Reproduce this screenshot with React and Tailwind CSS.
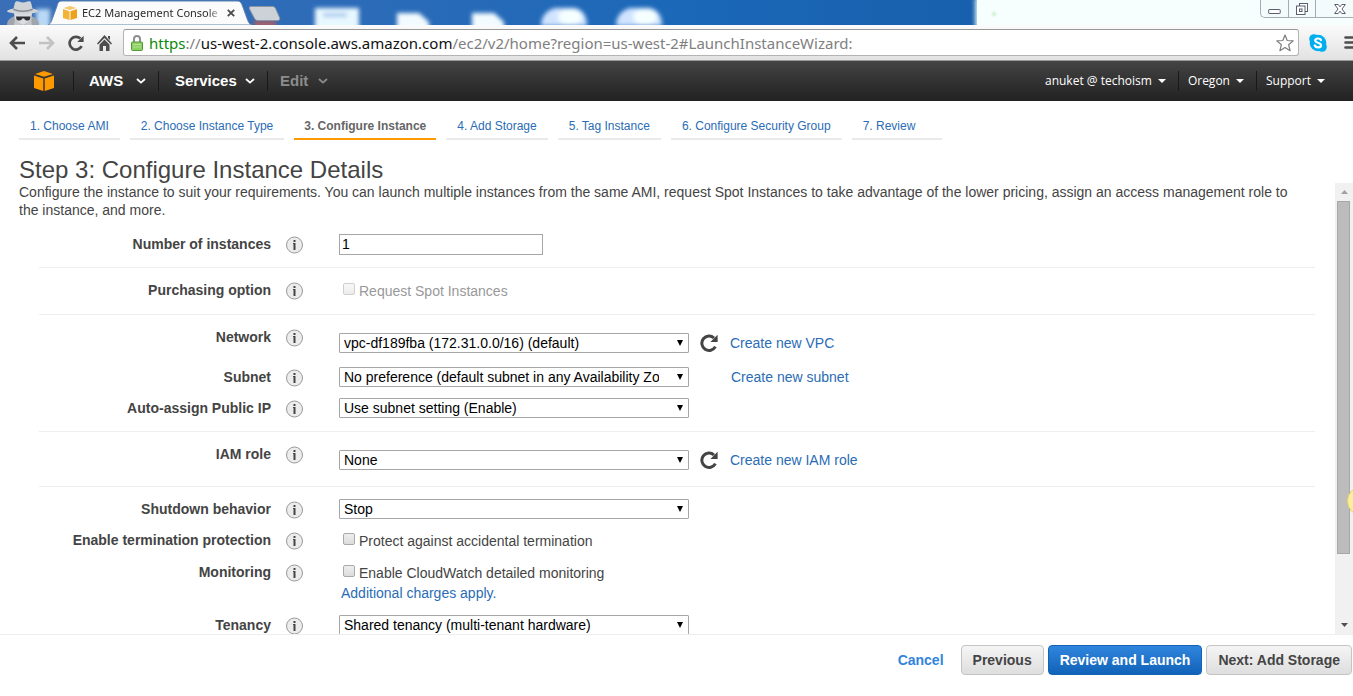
import React from 'react';

const steps = [
  { label: '1. Choose AMI' },
  { label: '2. Choose Instance Type' },
  { label: '3. Configure Instance', active: true },
  { label: '4. Add Storage' },
  { label: '5. Tag Instance' },
  { label: '6. Configure Security Group' },
  { label: '7. Review' },
];

const CubeIcon = ({ className, top, left, right }) => (
  <svg viewBox="0 0 20 20" className={className} aria-hidden="true">
    <path d="M10 0 19 3 10 5.800 1 3z" fill={top} />
    <path d="M0 4.400 9.300 7.400V20L0 17z" fill={left} />
    <path d="M20 4.400 10.700 7.400V20L20 17z" fill={right} />
  </svg>
);

const Chevron = () => (
  <svg viewBox="0 0 10 6" className="w-[10px] h-[6px]" fill="none" stroke="currentColor" strokeWidth="1.800" aria-hidden="true">
    <path d="M1 1l4 3.600L9 1" />
  </svg>
);

const Caret = () => (
  <svg viewBox="0 0 8 4" className="w-2 h-1" fill="currentColor" aria-hidden="true">
    <path d="M0 0h8L4 4z" />
  </svg>
);

const ReloadIcon = ({ className }) => (
  <svg viewBox="0 0 18 18" className={className} aria-hidden="true">
    <path d="M15.400 12.600A7.200 7.200 0 1 1 14 4" fill="none" stroke="currentColor" strokeWidth="3" />
    <path d="M17.600 .8V8h-7.200z" fill="currentColor" />
  </svg>
);

const TitleBar = () => (
  <div className="relative flex h-[25px] shrink-0 overflow-hidden bg-linear-to-r from-[#3a6fb8] via-[#1b68b8] to-[#13569f]">
    {/* desktop seen through the glass frame */}
    <svg className="absolute inset-0 w-full h-full" aria-hidden="true">
      <defs>
        <filter id="glass" x="-20%" y="-40%" width="140%" height="180%">
          <feGaussianBlur stdDeviation="2" />
        </filter>
      </defs>
      <g filter="url(#glass)">
        <rect x="36" y="9" width="14" height="22" fill="#b9d8f4" />
        <rect x="254" y="20" width="22" height="8" fill="#a0606c" />
        <rect x="315" y="8" width="44" height="24" fill="#e8f8ff" />
        <rect x="323" y="13" width="24" height="4" fill="#a9c9ec" />
        <path d="M397 13h22l10 9v8h-32z" fill="#f2fbff" />
        <path d="M472 13h22l10 9v8h-32z" fill="#f2fbff" />
        <path d="M541 26c0-10 6-16 14-18h20c8 2 12 8 12 18z" fill="#d0e4ff" />
        <ellipse cx="570" cy="17" rx="12" ry="8" fill="#f6ffff" />
        <path d="M616 26c0-10 6-16 14-18h20c8 2 12 8 12 18z" fill="#d0e4ff" />
        <ellipse cx="645" cy="17" rx="12" ry="8" fill="#f6ffff" />
      </g>
    </svg>
    <div className="absolute inset-y-0 right-0 w-[376px] bg-[#f6fffe] shadow-[0_0_4px_2px_#d5ebf3]" />
    <div className="absolute left-[992px] top-3 w-1 h-1 rounded-full bg-[#c8edc8] blur-[1px]" />

    <svg viewBox="0 0 34 24" className="relative ml-[6px] mt-px w-[34px] h-6 shrink-0" aria-hidden="true">
      <path d="M1 24c0-5 3-7 8-9h16c5 2 8 4 8 9z" fill="#9fa5ac" />
      <path d="M8 12h18l-1 8-8 4-8-4z" fill="#dadcdf" />
      <path d="M9 1.500C10 0 12 0 13.500 .8c2 1 5 1 7 0C22 0 24.500 0 25 1.500L26.500 7.500c2 .5 6 1.500 6 3C30 13.500 4 13.500 1 10.500c0-1.500 4-2.500 6.500-3z" fill="#cfd2d6" />
      <path d="M7.500 7.500c5 2.500 14 2.500 19 0l.5 1.500c-6 2.500-14 2.500-20 0z" fill="#878c93" />
      <path d="M10 15.500h14.500l-.5 2.500c-.6 2.200-5 2.200-5.800-.4h-2c-.8 2.600-5.200 2.600-5.800.4z" fill="#2c3036" />
      <path d="M9 18l7 6H8zM25 18l-7 6h8z" fill="#c3c7cc" />
    </svg>

    <div className="relative ml-2 w-[204px] h-[25px] shrink-0">
      <svg viewBox="0 0 204 25" className="absolute inset-0 w-full h-full" aria-hidden="true">
        <path d="M-1 25c4-1 4-3 6-8l4-11c1-4 2-5 6-5h173c4 0 5 1 6.500 5l4 11c2 5 2 7 6 8z" fill="#fbfbfb" stroke="#5d83ae" strokeWidth="1" />
      </svg>
      <div className="relative flex h-full items-center pl-[15px]">
        <CubeIcon className="w-[14px] h-[14px]" top="#f7c667" left="#f3b336" right="#eda21b" />
        <span className="ml-[5px] w-[140px] whitespace-nowrap font-['Noto_Sans','Open_Sans',sans-serif] text-[11px] leading-4 text-[#2b2b2b] mask-r-from-90%">
          EC2 Management Console
        </span>
        <button type="button" aria-label="Close tab" className="ml-[5px]">
          <svg viewBox="0 0 8 8" className="w-2 h-2" stroke="#4a4a4a" strokeWidth="1.800">
            <path d="M.8.8l6.400 6.400M7.200.8.8 7.200" />
          </svg>
        </button>
      </div>
    </div>

    <button type="button" aria-label="New tab" className="relative -ml-1 mt-[6px] h-4 w-[33px]">
      <svg viewBox="0 0 33 16" className="w-[33px] h-4">
        <path d="M3 .5h21c2 0 3 .5 4 3l3.500 8c.8 2 0 3-2 3H10c-2 0-3-1-4-3L1.500 3C.8 1.500 1.500.5 3 .5z" fill="#cdd2d8" stroke="#8c97a5" />
      </svg>
    </button>

    <div className="relative ml-auto flex h-[18px] rounded-bl-[5px] border-b border-l border-[#a5adb3] bg-[#f4fbfb]">
      <button type="button" aria-label="Minimize" className="flex w-7 items-center justify-center border-r border-[#a5adb3]">
        <svg viewBox="0 0 13 12" className="w-[13px] h-3" fill="#fff" stroke="#5a5f72">
          <rect x=".7" y="6.500" width="11.500" height="4" rx=".5" />
        </svg>
      </button>
      <button type="button" aria-label="Restore" className="flex w-[27px] items-center justify-center border-r border-[#a5adb3]">
        <svg viewBox="0 0 12 12" className="w-3 h-3" fill="#fff" stroke="#5a5f72">
          <rect x="3.500" y=".5" width="8" height="8" />
          <rect x=".5" y="3" width="8.500" height="8.500" />
          <rect x="3.500" y="6" width="2.500" height="2.500" />
        </svg>
      </button>
      <button type="button" aria-label="Close" className="flex w-[37px] items-center justify-center pl-[10px]">
        <svg viewBox="0 0 12 10" className="w-3 h-[10px]" fill="#fff" stroke="#5a5f72">
          <path d="M.7.5h3.500L6 2.800 7.800.5h3.500L8 5l3.300 4.500H7.800L6 7.200 4.200 9.500H.7L4 5z" />
        </svg>
      </button>
    </div>
  </div>
);

const Toolbar = () => (
  <div className="flex h-9 shrink-0 items-center border-b border-[#9a9a9a] bg-linear-to-b from-[#fbfbfb] to-[#e2e2e2] text-[#4d4d4d]">
    <button type="button" aria-label="Back" className="ml-[9px]">
      <svg viewBox="0 0 16 14" className="w-4 h-[14px]" fill="none" stroke="currentColor" strokeWidth="2.600">
        <path d="M16 7H2.500M8 1 2 7l6 6" />
      </svg>
    </button>
    <button type="button" aria-label="Forward" className="ml-[14px] text-[#c2c2c2]">
      <svg viewBox="0 0 16 14" className="w-4 h-[14px]" fill="none" stroke="currentColor" strokeWidth="2.600">
        <path d="M0 7h13.500M8 1l6 6-6 6" />
      </svg>
    </button>
    <button type="button" aria-label="Reload" className="ml-[13px]">
      <ReloadIcon className="w-4 h-4" />
    </button>
    <button type="button" aria-label="Home" className="ml-[13px]">
      <svg viewBox="0 0 15 16" className="w-[15px] h-4" fill="currentColor">
        <path d="M7.500 0 15 8.500l-1 1L7.500 3 1 9.500l-1-1zM11 1h2v4l-2-2z" />
        <path d="M2.500 9.500l5-5 5 5V16h-3.500v-5H6v5H2.500z" />
      </svg>
    </button>
    <div className="ml-[11px] flex h-[27px] grow items-center rounded-[3px] border border-[#b4b4b4] border-t-[#989898] bg-white pl-[7px] pr-1">
      <svg viewBox="0 0 12 16" className="w-3 h-4 shrink-0" aria-hidden="true">
        <path d="M3 8V4a3 3 0 0 1 6 0v4" fill="none" stroke="#8f8f8f" strokeWidth="2" />
        <rect x=".5" y="7" width="11" height="8.500" rx="1" fill="#8ccf62" stroke="#519a35" />
        <path d="M2 9.500h8M2 12h8" stroke="#b4e394" />
      </svg>
      <div role="textbox" aria-label="Address" className="ml-[6px] grow whitespace-nowrap font-['Noto_Sans','Open_Sans',sans-serif] text-[15px] leading-5 text-[#808080]">
        <span className="text-[#0a8a0a]">https</span>://<span className="text-[#111]">us-west-2.console.aws.amazon.com</span>/ec2/v2/home?region=us-west-2#LaunchInstanceWizard:
      </div>
      <button type="button" aria-label="Bookmark this page">
        <svg viewBox="0 0 18 18" className="w-[18px] h-[18px]" fill="#fff" stroke="#7d7d7d" strokeWidth="1.200" strokeLinejoin="round">
          <path d="M9 1l2.200 5.500 6 .4-4.600 3.800 1.500 6L9 13.400l-5.100 3.300 1.500-6L.8 6.900l6-.4z" />
        </svg>
      </button>
    </div>
    <button type="button" aria-label="Skype" className="ml-[10px]">
      <svg viewBox="0 0 18 18" className="w-[18px] h-[18px]">
        <circle cx="9" cy="9" r="8.300" fill="#00aff0" />
        <circle cx="5" cy="5" r="4.800" fill="#00aff0" />
        <circle cx="13" cy="13" r="4.800" fill="#00aff0" />
        <path d="M12 6C11 3.800 6 4 6.200 6.600 6.400 9.200 12 8.200 12 11.200c0 2.800-5.200 2.800-6.200.3" fill="none" stroke="#fff" strokeWidth="2.200" strokeLinecap="round" />
      </svg>
    </button>
    <button type="button" aria-label="Menu" className="ml-[17px] w-[9px] overflow-hidden">
      <svg viewBox="0 0 14 13" className="w-[14px] h-[13px] max-w-none" stroke="currentColor" strokeWidth="2.600" strokeLinecap="round">
        <path d="M1.500 1.500h11M1.500 6.500h11M1.500 11.500h11" />
      </svg>
    </button>
  </div>
);

const AwsNav = () => (
  <nav className="flex h-10 shrink-0 items-center bg-linear-to-b from-[#444] to-[#222] text-white">
    <a href="#home" aria-label="Console home" className="ml-[34px] mr-[19px]">
      <CubeIcon className="w-5 h-5" top="#ff9900" left="#ff9900" right="#ff9900" />
    </a>
    <button type="button" className="flex h-5 w-[85px] items-center justify-between border-l border-[#191919] pl-[15px] pr-3 text-[15px] font-bold">
      AWS <Chevron />
    </button>
    <button type="button" className="flex h-5 w-[109px] items-center justify-between border-l border-[#191919] pl-4 pr-3 text-[15px] font-bold">
      Services <Chevron />
    </button>
    <button type="button" className="flex h-5 w-[61px] items-center justify-between border-l border-[#191919] pl-3 text-[15px] font-bold text-[#8c8c8c]">
      Edit <Chevron />
    </button>
    <div className="ml-auto flex font-['Open_Sans','Noto_Sans',sans-serif] text-[12px] leading-5">
      <button type="button" className="flex items-center gap-[6px] pr-3">
        anuket @ techoism <Caret />
      </button>
      <button type="button" className="flex items-center gap-[6px] border-l border-[#191919] pl-[9px] pr-3">
        Oregon <Caret />
      </button>
      <button type="button" className="flex items-center gap-[6px] border-l border-[#191919] pl-[9px] pr-7">
        Support <Caret />
      </button>
    </div>
  </nav>
);

const InfoIcon = () => (
  <svg viewBox="0 0 18 18" className="mt-[2px] w-[18px] h-[18px]" role="img" aria-label="Info">
    <circle cx="8.500" cy="9" r="8" fill="#ececec" stroke="#999" />
    <path d="M7.500 4h2v2h-2zM7 7h2.500v7h-2V8H7z" fill="#444" />
  </svg>
);

const Row = ({ label, htmlFor, children }) => (
  <div className="grid grid-cols-[232px_18px_1fr] gap-x-[15px]">
    <label htmlFor={htmlFor} className="text-right text-[14px] font-bold leading-5">{label}</label>
    <InfoIcon />
    <div className="pl-5">{children}</div>
  </div>
);

const Select = ({ id, value }) => (
  <div className="relative w-[350px]">
    <select
      id={id}
      defaultValue={value}
      className="block h-5 w-full appearance-none rounded-[1px] border border-[#a6a6a6] bg-white pl-1 pr-[29px] text-[14px] leading-[18px] text-black"
    >
      <option>{value}</option>
    </select>
    <svg viewBox="0 0 6 6" className="pointer-events-none absolute right-[6px] top-[7px] w-[6px] h-[6px]" aria-hidden="true">
      <path d="M0 0h6L3 6z" fill="#000" />
    </svg>
  </div>
);

const Checkbox = ({ id, label, disabled }) => (
  <div className={disabled ? 'flex pl-1 text-[#999]' : 'flex pl-1'}>
    <input
      id={id}
      type="checkbox"
      disabled={disabled}
      className="mt-[3px] h-3 w-3 appearance-none rounded-[2px] border border-[#a9a9a9] bg-linear-to-b from-[#eee] to-[#dcdcdc] disabled:border-[#cfcfcf] disabled:from-[#f8f8f8] disabled:to-[#ececec]"
    />
    <label htmlFor={id} className="ml-1 pt-px leading-5">{label}</label>
  </div>
);

const Refresh = () => (
  <button type="button" aria-label="Refresh" className="ml-[11px] mr-3 text-[#444]">
    <ReloadIcon className="w-[18px] h-[18px]" />
  </button>
);

const Link = ({ children, className = '' }) => (
  <a href="#create" className={`leading-5 text-[#2a6cb5] ${className}`}>{children}</a>
);

const DetailsForm = () => (
  <form className="ml-5 mr-5">
    <div className="border-b border-[#eee] pt-[15px] pb-3">
      <Row label="Number of instances" htmlFor="count">
        <input id="count" type="text" defaultValue="1" className="block h-[21px] w-[204px] border border-[#a6a6a6] px-[2px] text-[14px] text-black" />
      </Row>
    </div>
    <div className="border-b border-[#eee] pt-3 pb-[13px]">
      <Row label="Purchasing option" htmlFor="spot">
        <Checkbox id="spot" label="Request Spot Instances" disabled />
      </Row>
    </div>
    <div className="flex flex-col gap-[11px] border-b border-[#eee] pt-3 pb-[13px]">
      <Row label="Network" htmlFor="network">
        <div className="flex items-center pt-[6px] pb-[3px]">
          <Select id="network" value="vpc-df189fba (172.31.0.0/16) (default)" />
          <Refresh />
          <Link>Create new VPC</Link>
        </div>
      </Row>
      <Row label="Subnet" htmlFor="subnet">
        <div className="flex items-center">
          <Select id="subnet" value="No preference (default subnet in any Availability Zone)" />
          <Link className="ml-[42px]">Create new subnet</Link>
        </div>
      </Row>
      <Row label="Auto-assign Public IP" htmlFor="public-ip">
        <Select id="public-ip" value="Use subnet setting (Enable)" />
      </Row>
    </div>
    <div className="border-b border-[#eee] pt-3 pb-4">
      <Row label="IAM role" htmlFor="iam">
        <div className="flex items-center pt-[6px]">
          <Select id="iam" value="None" />
          <Refresh />
          <Link>Create new IAM role</Link>
        </div>
      </Row>
    </div>
    <div className="flex flex-col gap-[11px] pt-3">
      <Row label="Shutdown behavior" htmlFor="shutdown">
        <Select id="shutdown" value="Stop" />
      </Row>
      <Row label="Enable termination protection" htmlFor="protect">
        <Checkbox id="protect" label="Protect against accidental termination" />
      </Row>
      <Row label="Monitoring" htmlFor="monitoring">
        <Checkbox id="monitoring" label="Enable CloudWatch detailed monitoring" />
        <Link className="ml-[2px]">Additional charges apply.</Link>
      </Row>
      <Row label="Tenancy" htmlFor="tenancy">
        <Select id="tenancy" value="Shared tenancy (multi-tenant hardware)" />
      </Row>
    </div>
  </form>
);

const Scrollbar = () => (
  <div className="flex w-[18px] shrink-0 flex-col items-center bg-[#f1f1f1]" aria-hidden="true">
    <svg viewBox="0 0 7 4" className="my-[7px] w-[7px] h-1 shrink-0"><path d="M0 4h7L3.500 0z" fill="#a0a0a0" /></svg>
    <div className="w-full grow px-[2px]">
      <div className="mr-[1px] h-[85%] border border-[#a8a8a8] bg-[#bcbcbc]" />
    </div>
    <svg viewBox="0 0 7 4" className="my-[7px] w-[7px] h-1 shrink-0"><path d="M0 0h7L3.500 4z" fill="#505050" /></svg>
  </div>
);

const App = () => {
  return (
    <div className="relative flex h-screen flex-col overflow-hidden bg-white font-['Liberation_Sans',Arial,sans-serif] text-[14px] text-[#444]">
      <TitleBar />
      <Toolbar />
      <AwsNav />

      <main className="flex min-h-0 grow flex-col">
        <ol className="ml-[19px] mt-4 flex gap-[10px] text-[12px] leading-[18px]">
          {steps.map((step) => (
            <li
              key={step.label}
              className={
                step.active
                  ? 'min-w-[90px] border-b-2 border-[#f90] px-[10px] pb-[3px] font-bold text-[#666]'
                  : 'min-w-[90px] border-b-2 border-[#eaeaea] px-[11px] pb-[3px] text-[#2a6cb5]'
              }
            >
              {step.active ? step.label : <a href="#step">{step.label}</a>}
            </li>
          ))}
        </ol>
        <h1 className="ml-[19px] mt-4 text-[24px] leading-[27px]">Step 3: Configure Instance Details</h1>

        <div className="flex min-h-0 grow border-b border-[#eee]">
          <div className="min-w-0 grow overflow-hidden pl-[19px]">
            <p className="pr-8 leading-[18px]">
              Configure the instance to suit your requirements. You can launch multiple instances from the same AMI, request Spot Instances to take advantage of the lower pricing, assign an access management role to the instance, and more.
            </p>
            <DetailsForm />
          </div>
          <Scrollbar />
        </div>
      </main>

      <footer className="flex shrink-0 items-center justify-end gap-1 pt-[10px] pr-px pb-[21px] text-[14px] font-bold">
        <a href="#cancel" className="mr-[13px] text-[#3283de]">Cancel</a>
        <button type="button" className="h-[30px] rounded-[4px] border border-[#c4c4c4] bg-linear-to-b from-[#f5f5f5] to-[#dedede] px-[11px]">
          Previous
        </button>
        <button type="button" className="h-[30px] rounded-[4px] border border-[#1362b3] bg-linear-to-b from-[#2f85dd] to-[#1163b9] px-[11px] text-white">
          Review and Launch
        </button>
        <button type="button" className="h-[30px] rounded-[4px] border border-[#c4c4c4] bg-linear-to-b from-[#f5f5f5] to-[#dedede] px-[11px]">
          Next: Add Storage
        </button>
      </footer>

      <div className="absolute -right-6 bottom-[180px] h-[30px] w-[30px] rounded-full border border-[#e9cf62] bg-[#fbeea0]" />
    </div>
  );
};

export default App;
